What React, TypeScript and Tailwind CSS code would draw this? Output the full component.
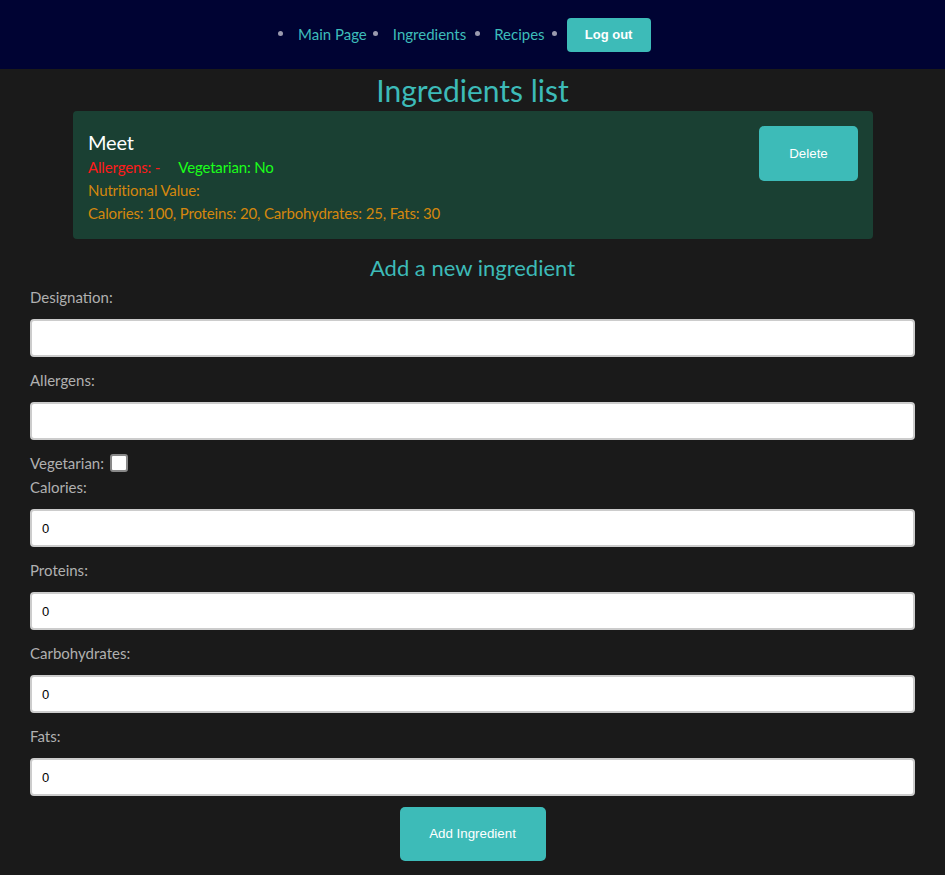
import { useState } from "react";

const fields = [
  { label: "Calories", value: "0" },
  { label: "Proteins", value: "0" },
  { label: "Carbohydrates", value: "0" },
  { label: "Fats", value: "0" },
];

function Bullet() {
  return <span className="inline-block w-[5px] h-[5px] rounded-full bg-[#9a9aae] -translate-y-[1px]" />;
}

export default function App() {
  const [vegetarian, setVegetarian] = useState(false);

  return (
    <div className="min-h-screen bg-[#1a1a1a] font-['Lato','Noto_Sans',sans-serif]">
      {/* Top Navigation */}
      <nav className="h-[69px] bg-[#000333] flex items-center pl-[278px] text-[15px]">
        <Bullet />
        <a className="ml-[15px] text-[#3dbdba]">Main Page</a>
        <span className="ml-[6px] flex"><Bullet /></span>
        <a className="ml-[15px] text-[#3dbdba]">Ingredients</a>
        <span className="ml-[9px] flex"><Bullet /></span>
        <a className="ml-[14px] text-[#3dbdba]">Recipes</a>
        <span className="ml-[7px] flex"><Bullet /></span>
        <button className="ml-[10px] w-[84px] h-[34px] rounded-[4px] bg-[#3dbbb8] text-white text-[13px] font-semibold font-['Liberation_Sans',Arial,sans-serif]">
          Log out
        </button>
      </nav>

      <h1 className="text-center text-[30px] leading-[40px] text-[#3dbbb8] pt-[1px]">Ingredients list</h1>

      {/* Ingredient card */}
      <div className="ml-[73px] mr-[72px] mt-[1px] rounded-[4px] bg-[#1a4033] px-[15px] pt-[15px] pb-[14px] flex justify-between">
        <div className="pt-[4px] tracking-[-0.15px]">
          <div className="text-white text-[20px] leading-[24px]">Meet</div>
          <div className="mt-[2px] text-[15px] leading-[23px]">
            <span className="text-[#ff1a1a]">Allergens: -</span>
            <span className="ml-[18px] text-[#1aff1a]">Vegetarian: No</span>
          </div>
          <div className="text-[15px] leading-[23px] text-[#d4870e]">Nutritional Value:</div>
          <div className="text-[15px] leading-[23px] text-[#d4870e]">
            Calories: 100, Proteins: 20, Carbohydrates: 25, Fats: 30
          </div>
        </div>
        <button className="w-[99px] h-[55px] rounded-[5px] bg-[#3dbbb8] text-white text-[13.33px] font-['Liberation_Sans',Arial,sans-serif]">
          Delete
        </button>
      </div>

      <h2 className="text-center text-[22px] leading-[30px] text-[#3dbbb8] mt-[14px]">Add a new ingredient</h2>

      {/* Form */}
      <form className="px-[30px] pb-[14px] text-[15px] text-[#b0b0b0]">
        <label className="block leading-[22px] mt-[3px]">Designation:</label>
        <input className="mt-[11px] block w-full h-[38px] bg-white border-2 border-[#cccccc] rounded-[4px] px-[10px] text-[13px] text-black" />
        <label className="block leading-[22px] mt-[12px]">Allergens:</label>
        <input className="mt-[11px] block w-full h-[38px] bg-white border-2 border-[#cccccc] rounded-[4px] px-[10px] text-[13px] text-black" />
        <div className="flex items-center mt-[14px] h-[18px]">
          <label>Vegetarian:</label>
          <input
            type="checkbox"
            checked={vegetarian}
            onChange={(e) => setVegetarian(e.target.checked)}
            className="ml-[6px] appearance-none w-[18px] h-[18px] bg-white border-2 border-[#888] rounded-[3px]"
          />
        </div>
        <label className="block leading-[22px] mt-[4px]">Calories:</label>
        {fields.map((f, i) => (
          <div key={f.label}>
            {i > 0 && <label className="block leading-[22px] mt-[12px]">{f.label}:</label>}
            <input
              defaultValue={f.value}
              className="mt-[11px] block w-full h-[38px] bg-white border-2 border-[#cccccc] rounded-[4px] px-[10px] text-[13px] text-black font-['Liberation_Sans',Arial,sans-serif]"
            />
          </div>
        ))}
        <div className="flex justify-center mt-[11px]">
          <button
            type="button"
            className="w-[146px] h-[54px] rounded-[5px] bg-[#3dbbb8] text-white text-[13.33px] font-['Liberation_Sans',Arial,sans-serif]"
          >
            Add Ingredient
          </button>
        </div>
      </form>
    </div>
  );
}
